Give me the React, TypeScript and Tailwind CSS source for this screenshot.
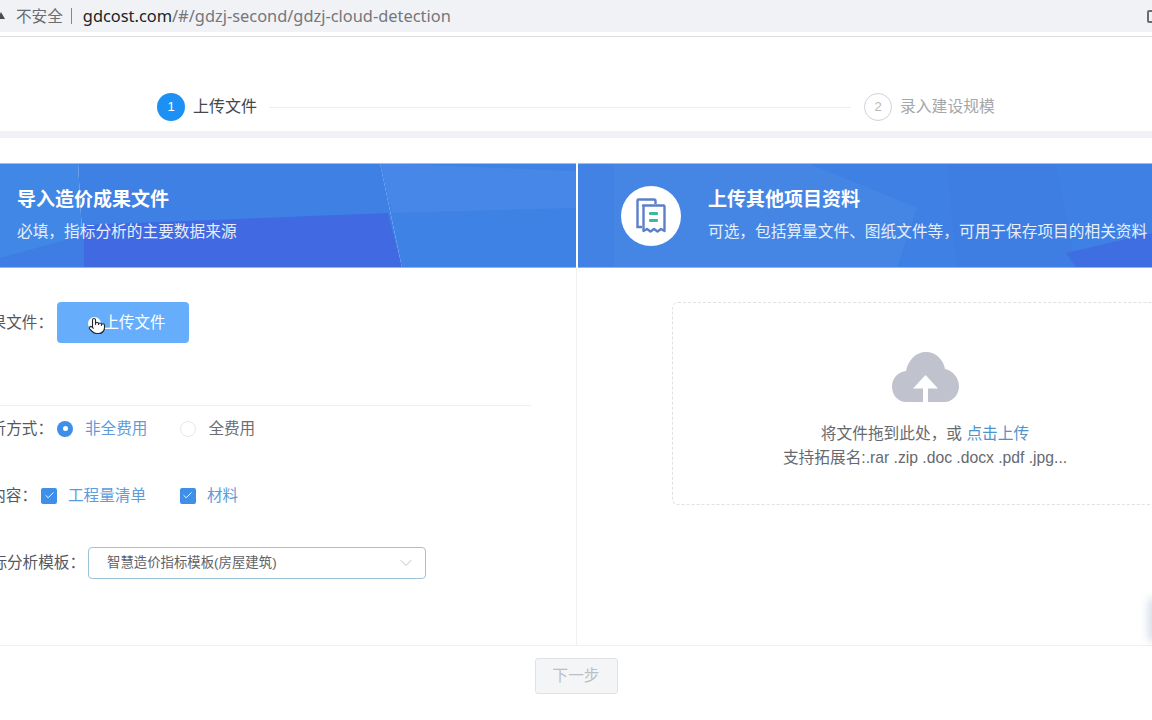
import React from "react";
import { ChevronDown, Check, Pointer } from "lucide-react";

const FormLabel: React.FC<{ width: string; text: string }> = ({ width, text }) => (
  <div className={`${width} flex shrink-0 justify-end overflow-hidden whitespace-nowrap text-[15.6px] text-[#55585f]`}>
    <span className="shrink-0">{text}</span>
  </div>
);

const Radio: React.FC<{ label: string; checked?: boolean }> = ({ label, checked }) => (
  <div className="flex items-center gap-[12px]">
    {checked ? (
      <span className="flex h-[16px] w-[16px] items-center justify-center rounded-full bg-[#3f8fe8]">
        <span className="h-[5px] w-[5px] rounded-full bg-white" />
      </span>
    ) : (
      <span className="h-[16px] w-[16px] rounded-full border border-[#e6e8ec] bg-white" />
    )}
    <span className={`text-[15.6px] ${checked ? "text-[#5c9bdc]" : "text-[#6a6d73]"}`}>{label}</span>
  </div>
);

const Tick: React.FC<{ label: string }> = ({ label }) => (
  <div className="flex items-center gap-[11px]">
    <span className="flex h-[16px] w-[16px] items-center justify-center rounded-[2px] bg-[#3f8fe8]">
      <Check size={11} strokeWidth={2} className="text-white" />
    </span>
    <span className="text-[15.6px] text-[#5c9bdc]">{label}</span>
  </div>
);

const BannerArt: React.FC<{ side: "left" | "right" }> = ({ side }) => (
  <svg className="absolute inset-0 h-full w-full" viewBox="0 0 576 105" preserveAspectRatio="none">
    {side === "left" ? (
      <>
        <polygon points="0,0 78,0 84,105 0,105" fill="#4187e6" />
        <polygon points="78,0 380,0 402,105 84,105" fill="#3f80e4" />
        <polygon points="84,62 388,50 402,105 84,105" fill="#4069e2" />
        <polygon points="0,95 84,72 84,105 0,105" fill="#3f7ce3" />
        <polygon points="380,0 576,0 576,105 402,105" fill="#3f82e5" />
        <polygon points="380,0 576,8 576,45 392,50" fill="#4687e7" />
      </>
    ) : (
      <>
        <polygon points="0,0 576,0 576,105 0,105" fill="#3f80e4" />
        <polygon points="0,0 36,0 36,105 0,105" fill="#4282e5" />
        <polygon points="36,0 230,0 340,45 320,105 36,105" fill="#4586e5" />
        <polygon points="370,0 480,0 500,105 380,105" fill="#3e7ee3" />
        <polygon points="490,90 576,70 576,105 500,105" fill="#3f6ee2" />
      </>
    )}
    <rect x="0" y="0" width="576" height="1" fill="#9dbff0" />
    <rect x="0" y="104" width="576" height="1" fill="#8fb4ee" />
  </svg>
);

const DocIcon = () => (
  <svg width="32" height="36" viewBox="0 0 32 36" fill="none">
    <path d="M7 29H2.500V2.500a1 1 0 0 1 1-1H19a1.500 1.500 0 0 1 1.500 1.500V6" stroke="#5b80c8" strokeWidth="2.400" />
    <path d="M8 7.500h20.500a1 1 0 0 1 1 1V33l-3.500-2-3.500 2.500-3.500-2.500-3.500 2.500-3.500-2.500-3.500 2V8.500a1 1 0 0 1 1-1z" fill="#fff" stroke="#5b80c8" strokeWidth="2.400" strokeLinejoin="round" />
    <rect x="14" y="14" width="9" height="3" rx="1" fill="#3fb8a0" />
    <rect x="14" y="21" width="9" height="3" rx="1" fill="#3fb8a0" />
  </svg>
);

const CloudIcon = () => (
  <svg width="67" height="50" viewBox="0 0 67 50">
    <path d="M14 50C6 50 0 43 0 34.500 0 26 6.500 19.500 14 19 16 8 24 0 34 0c9.500 0 17.500 7.500 19 17 8 1.500 14 9 14 17.500C67 43 60 50 53 50z" fill="#c0c3cd" />
    <path d="M33.500 23 46 36.500H36V50h-5V36.500H21z" fill="#fff" />
  </svg>
);

export default function App() {
  return (
    <div className="relative flex h-[720px] w-[1152px] flex-col overflow-hidden bg-white font-['Liberation_Sans','Noto_Sans_CJK_SC',sans-serif]">
      {/* browser bar */}
      <div className="h-[37px] shrink-0 border-b border-[#dcdee2] bg-white">
        <div className="flex h-[32px] items-center justify-between bg-[#f0f2f6]">
          <div className="flex items-center">
            <span className="ml-[-3px] h-0 w-0 border-x-[4px] border-b-[7px] border-x-transparent border-b-[#4a4c50]" />
            <span className="ml-[11px] font-['Noto_Sans_CJK_SC',sans-serif] text-[15.6px] text-[#6a6c70]">不安全</span>
            <span className="ml-[8px] h-[16px] w-px bg-[#85878b]" />
            <span className="ml-[11px] font-['Noto_Sans',sans-serif] text-[16.4px] text-[#75777b]">
              <span className="text-[#202226]">gdcost.com</span>/#/gdzj-second/gdzj-cloud-detection
            </span>
          </div>
          <span className="mr-[-6px] h-[13px] w-[11px] rounded-[2px] border-2 border-[#6a6c70]" />
        </div>
      </div>

      {/* steps */}
      <div className="flex h-[94px] shrink-0 items-center pl-[157px] pt-[52px] pb-[6px]">
        <span className="flex h-[28px] w-[28px] items-center justify-center rounded-full bg-[#1d90f5] text-[13px] text-white">1</span>
        <span className="ml-[8px] text-[16px] text-[#44474c]">上传文件</span>
        <span className="ml-[12px] h-px w-[582px] bg-[#eceef1]" />
        <span className="ml-[13px] flex h-[28px] w-[28px] items-center justify-center rounded-full border border-[#d0d2d6] text-[13px] text-[#b5b7bb]">2</span>
        <span className="ml-[8px] text-[15.8px] text-[#a5a7ab]">录入建设规模</span>
      </div>
      <div className="h-[7px] shrink-0 bg-[#eff1f5]" />

      {/* panels */}
      <div className="flex flex-1 flex-col pt-[25px]">
        <div className="flex flex-1">
          <div className="flex w-[576px] shrink-0 flex-col">
            <div className="relative flex h-[105px] flex-col justify-center overflow-hidden pb-[2px] pl-[17px] text-white">
              <BannerArt side="left" />
              <div className="relative text-[19px] leading-[26px] font-bold">导入造价成果文件</div>
              <div className="relative mt-[8px] text-[15.7px] leading-[22px] text-[#e6eefb]">必填，指标分析的主要数据来源</div>
            </div>
            <div className="flex flex-col pt-[34px]">
              <div className="flex items-center gap-[4px]">
                <FormLabel width="w-[53px]" text="成果文件：" />
                <div className="relative flex h-[41px] w-[132px] items-center justify-center rounded-[4px] bg-[#66aefb] pl-[23px] text-[15.5px] text-white">
                  上传文件
                  <span className="absolute left-[31px] top-[15px] h-[13px] w-[13px] rounded-full bg-white" />
                  <Pointer size={18} strokeWidth={1.500} fill="#fff" className="absolute left-[31px] top-[15px] text-[#24272c]" />
                </div>
              </div>
              <div className="mt-[62px] h-px w-[531px] bg-[#eceef1]" />
              <div className="mt-[11px] flex h-[24px] items-center gap-[4px]">
                <FormLabel width="w-[53px]" text="分析方式：" />
                <div className="flex gap-[33px]">
                  <Radio label="非全费用" checked />
                  <Radio label="全费用" />
                </div>
              </div>
              <div className="mt-[43px] flex h-[24px] items-center gap-[4px]">
                <FormLabel width="w-[37px]" text="分析内容：" />
                <div className="flex gap-[34px]">
                  <Tick label="工程量清单" />
                  <Tick label="材料" />
                </div>
              </div>
              <div className="mt-[39px] flex items-center gap-[3px]">
                <FormLabel width="w-[85px]" text="指标分析模板：" />
                <div className="flex h-[32px] w-[338px] items-center justify-between rounded-[4px] border border-[#9cc3d8] pl-[18px] pr-[9px] text-[13.4px] text-[#5f6268]">
                  智慧造价指标模板(房屋建筑)
                  <ChevronDown size={20} strokeWidth={1} className="text-[#b0b4ba]" />
                </div>
              </div>
            </div>
          </div>

          <div className="flex w-[2px] shrink-0 flex-col">
            <div className="h-[105px]" />
            <div className="w-px flex-1 bg-[#f0f1f4]" />
          </div>

          <div className="flex w-[574px] shrink-0 flex-col">
            <div className="relative flex h-[105px] items-center overflow-hidden pl-[43px] text-white">
              <BannerArt side="right" />
              <div className="relative flex h-[60px] w-[60px] shrink-0 items-center justify-center rounded-full bg-white">
                <DocIcon />
              </div>
              <div className="relative ml-[27px] flex flex-col whitespace-nowrap pb-[2px]">
                <div className="text-[19px] leading-[26px] font-bold">上传其他项目资料</div>
                <div className="mt-[8px] text-[15.7px] leading-[22px] text-[#e6eefb]">可选，包括算量文件、图纸文件等，可用于保存项目的相关资料</div>
              </div>
            </div>
            <div className="pl-[94px] pt-[34px]">
              <div className="flex h-[203px] w-[506px] flex-col items-center rounded-[6px] border border-dashed border-[#dfe1e5] pt-[49px] whitespace-nowrap">
                <CloudIcon />
                <div className="mt-[20px] text-[15.7px] leading-[24px] text-[#66696f]">
                  将文件拖到此处，或 <span className="text-[#4f94c9]">点击上传</span>
                </div>
                <div className="text-[15.7px] leading-[24px] text-[#66696f]">支持拓展名:.rar .zip .doc .docx .pdf .jpg...</div>
              </div>
            </div>
          </div>
        </div>

        {/* footer */}
        <div className="flex h-[75px] shrink-0 justify-center border-t border-[#eef0f3] pt-[12px]">
          <button className="h-[36px] w-[83px] rounded-[3px] border border-[#e0e2e6] bg-[#f4f5f7] text-[15.6px] text-[#bcbec2]">下一步</button>
        </div>
      </div>

      {/* floating widget at the right edge, mostly out of view */}
      <div className="absolute right-[-8px] top-[598px] h-[44px] w-[12px] rounded-full bg-[#d5dcea] blur-[4px]" />
    </div>
  );
}
